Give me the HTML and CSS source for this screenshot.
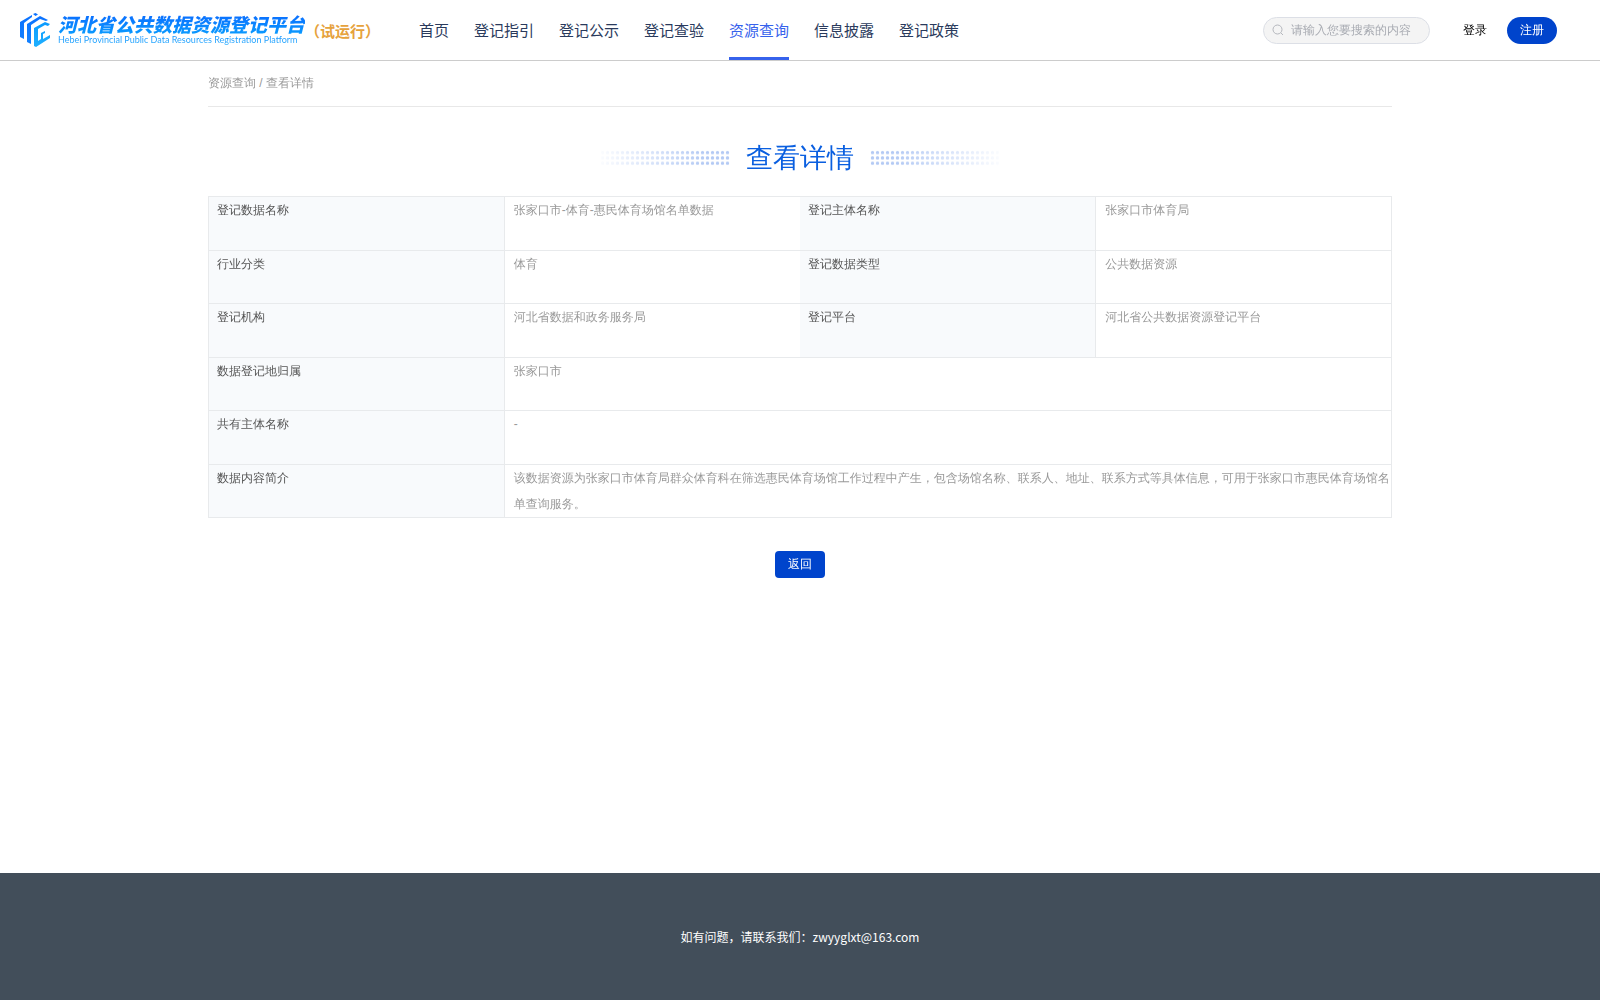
FILE: index.html
```
<!DOCTYPE html>
<html lang="zh-CN">
<head>
    <meta charset="UTF-8">
    <meta name="viewport" content="width=device-width, initial-scale=1.0">
    <title>河北省公共数据资源登记平台</title>
    <link rel="stylesheet" href="styles.css">
</head>
<body>
    <header class="header">
        <a class="logo" href="#">
            <svg class="logo-icon" viewBox="0 0 30 34" aria-hidden="true">
                <defs>
                    <linearGradient id="logoDark" x1="0" y1="0" x2="0" y2="1">
                        <stop offset="0" stop-color="#0a70ff"/>
                        <stop offset="1" stop-color="#1482ff"/>
                    </linearGradient>
                    <linearGradient id="logoLight" x1="0" y1="0" x2="0" y2="1">
                        <stop offset="0" stop-color="#0a9aff"/>
                        <stop offset="1" stop-color="#1fb0ff"/>
                    </linearGradient>
                </defs>
                <path fill="url(#logoDark)" d="M0 9 12 2V4L4 10V26L0 24ZM13 1 15.500 0 18 1.500 15.500 3ZM7 11 20 3 28 7 26 8 20 6 11 12V31L7 29Z"/>
                <path fill="url(#logoLight)" d="M14 15 25 9 30 11 28 13 25 12 18 16V28L21 26V20L25 18V20L23 21V26L30 22V25L16 34 14 33Z"/>
            </svg>
            <span class="logo-text">
                <span class="logo-cn">河北省公共数据资源登记平台</span>
                <span class="logo-en">Hebei Provincial Public Data Resources Registration Platform</span>
            </span>
            <span class="logo-tag">（试运行）</span>
        </a>
        <nav class="nav">
            <a href="#">首页</a>
            <a href="#">登记指引</a>
            <a href="#">登记公示</a>
            <a href="#">登记查验</a>
            <a href="#" class="active">资源查询</a>
            <a href="#">信息披露</a>
            <a href="#">登记政策</a>
        </nav>
        <label class="search">
            <svg viewBox="0 0 12 12" aria-hidden="true">
                <circle cx="5.500" cy="5.500" r="4.500"/>
                <path d="M9 9l2 2"/>
            </svg>
            <input type="text" placeholder="请输入您要搜索的内容" aria-label="搜索">
        </label>
        <button type="button" class="login">登录</button>
        <button type="button" class="btn btn-round">注册</button>
    </header>

    <main class="container">
        <div class="breadcrumb"><a href="#">资源查询</a> / <span>查看详情</span></div>
        <div class="title">
            <svg class="dots" viewBox="0 0 130 16" aria-hidden="true">
                <defs>
                    <pattern id="dot" width="5" height="5.330" patternUnits="userSpaceOnUse">
                        <circle cx="2.500" cy="2.600" r="1.700" fill="#b4caf4"/>
                    </pattern>
                    <linearGradient id="fade">
                        <stop offset="0" stop-color="#fff" stop-opacity="0.050"/>
                        <stop offset="0.800" stop-color="#fff"/>
                    </linearGradient>
                    <mask id="fadeMask"><rect width="130" height="16" fill="url(#fade)"/></mask>
                </defs>
                <rect width="130" height="16" fill="url(#dot)" mask="url(#fadeMask)"/>
            </svg>
            <h1>查看详情</h1>
            <svg class="dots dots-right" viewBox="0 0 130 16" aria-hidden="true">
                <rect width="130" height="16" fill="url(#dot)" mask="url(#fadeMask)"/>
            </svg>
        </div>
        <table class="detail">
            <tbody>
                <tr>
                    <th>登记数据名称</th>
                    <td>张家口市-体育-惠民体育场馆名单数据</td>
                    <th>登记主体名称</th>
                    <td>张家口市体育局</td>
                </tr>
                <tr>
                    <th>行业分类</th>
                    <td>体育</td>
                    <th>登记数据类型</th>
                    <td>公共数据资源</td>
                </tr>
                <tr>
                    <th>登记机构</th>
                    <td>河北省数据和政务服务局</td>
                    <th>登记平台</th>
                    <td>河北省公共数据资源登记平台</td>
                </tr>
                <tr>
                    <th>数据登记地归属</th>
                    <td colspan="3">张家口市</td>
                </tr>
                <tr>
                    <th>共有主体名称</th>
                    <td colspan="3">-</td>
                </tr>
                <tr>
                    <th>数据内容简介</th>
                    <td colspan="3">该数据资源为张家口市体育局群众体育科在筛选惠民体育场馆工作过程中产生，包含场馆名称、联系人、地址、联系方式等具体信息，可用于张家口市惠民体育场馆名单查询服务。</td>
                </tr>
            </tbody>
        </table>
        <button type="button" class="btn btn-back">返回</button>
    </main>

    <footer class="footer">如有问题，请联系我们：zwyyglxt@163.com</footer>
</body>
</html>
```
FILE: styles.css
```
* {
    box-sizing: border-box;
}
body {
    margin: 0;
    min-height: 100vh;
    display: flex;
    flex-direction: column;
    font-family: "Liberation Sans", "WenQuanYi Zen Hei", "Noto Sans CJK SC", sans-serif;
    font-size: 12px;
    color: #333;
    background: #fff;
}
a {
    color: inherit;
    text-decoration: none;
}
button, input {
    font: inherit;
}
.header {
    display: flex;
    align-items: center;
    height: 61px;
    padding: 0 43px 0 20px;
    border-bottom: 1px solid #ccc;
}
.logo {
    display: flex;
    align-items: center;
    font-family: "Noto Sans CJK SC", sans-serif;
    white-space: nowrap;
}
.logo-icon {
    width: 30px;
    height: 34px;
    margin-right: 8px;
}
.logo-text {
    display: flex;
    flex-direction: column;
    align-items: flex-start;
    width: 247px;
}
.logo-cn, .logo-en {
    color: transparent;
    background: linear-gradient(#0a6cff, #0a9aff);
    -webkit-background-clip: text;
    background-clip: text;
}
.logo-cn {
    font-size: 19px;
    font-weight: 900;
    font-style: italic;
    line-height: 20px;
}
.logo-en {
    font-family: Lato, sans-serif;
    font-size: 9px;
    line-height: 12px;
    background-image: linear-gradient(#0a8cff, #2fb0ff);
}
.logo-tag {
    font-size: 15px;
    font-weight: bold;
    color: #e6a23c;
}
.nav {
    display: flex;
    gap: 25px;
    height: 60px;
    margin: 0 auto 0 39px;
    font-family: "Noto Sans CJK SC", sans-serif;
    font-size: 15px;
    line-height: 60px;
    color: #2a3a5c;
    white-space: nowrap;
}
.nav .active {
    color: #3662ec;
    border-bottom: 3px solid #3662ec;
}
.search {
    display: flex;
    align-items: center;
    width: 167px;
    height: 27px;
    padding: 0 8px;
    border: 1px solid #dcdfe6;
    border-radius: 14px;
    background: #f4f4f4;
}
.search svg {
    flex: none;
    width: 12px;
    height: 12px;
    margin-right: 7px;
    fill: none;
    stroke: #b4b7bd;
}
.search input {
    width: 100%;
    min-width: 0;
    padding: 0;
    border: 0;
    outline: 0;
    background: none;
}
.search input::placeholder {
    color: #a8abb2;
}
.login {
    margin: 0 20px 0 33px;
    padding: 0;
    border: 0;
    background: none;
    color: #000;
    cursor: pointer;
}
.btn {
    height: 27px;
    padding: 0 13px;
    border: 0;
    border-radius: 4px;
    background: #0044cc;
    color: #fff;
    cursor: pointer;
}
.btn-round {
    border-radius: 14px;
}
.container {
    display: flex;
    flex-direction: column;
    flex: 1;
    width: 74%;
    margin: 0 auto;
}
.breadcrumb {
    padding: 10px 0;
    border-bottom: 1px solid #e8e8e8;
    line-height: 25px;
    color: #999;
}
.title {
    display: flex;
    align-items: center;
    justify-content: center;
    gap: 16px;
    padding: 33px 0 20px;
}
.title h1 {
    margin: 0;
    font-size: 27px;
    font-weight: normal;
    line-height: 36px;
    color: #0a5fe0;
}
.dots {
    width: 130px;
    height: 16px;
}
.dots-right {
    transform: scaleX(-1);
}
.detail {
    width: 100%;
    height: 322px;
    table-layout: fixed;
    border-collapse: collapse;
    border: 1px solid #e8eaec;
    line-height: 26px;
}
.detail th, .detail td {
    height: 53px;
    padding: 0 0 0 8px;
    border-bottom: 1px solid #e8eaec;
    text-align: left;
    vertical-align: top;
}
.detail th {
    border-right: 1px solid #e8eaec;
    background: #f8fafc;
    font-weight: normal;
    color: #555;
}
.detail td {
    padding-left: 9px;
    color: #999;
}
.btn-back {
    align-self: center;
    margin: 33px 0;
}
.footer {
    padding: 51px 0;
    background: #424e5a;
    font-family: "Noto Sans CJK SC", sans-serif;
    line-height: 25px;
    color: #fff;
    text-align: center;
}
```
